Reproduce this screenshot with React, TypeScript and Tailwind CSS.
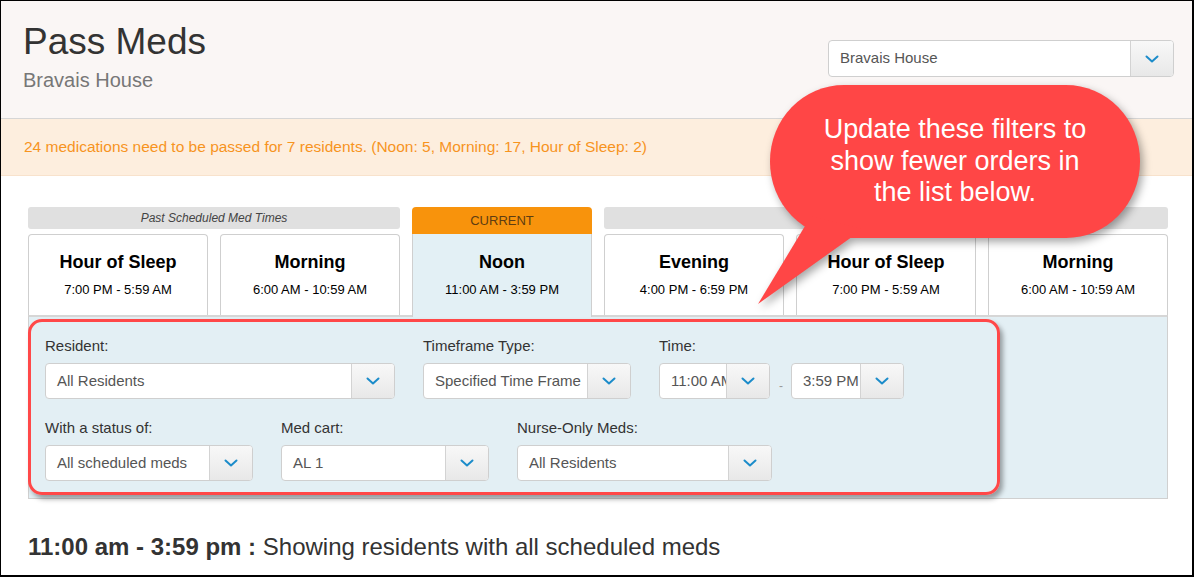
import React from "react";

const font = { fontFamily: '"Liberation Sans", Arial, sans-serif' };

function Chevron() {
  return (
    <svg width="14" height="8" viewBox="0 0 14 8" fill="none">
      <path d="M1.5 1.5l5.5 5 5.5-5" stroke="#1c8cca" strokeWidth="2" strokeLinecap="round" strokeLinejoin="round" />
    </svg>
  );
}

function Select({ value, width, h = "h-[36px]" }: { value: string; width: string; h?: string }) {
  return (
    <div className={`flex ${width} ${h} overflow-hidden rounded-[4px] border border-[#cfcfcf] bg-white`}>
      <div className="flex min-w-0 flex-1 items-center overflow-hidden whitespace-nowrap pl-[11px] text-[15px] text-[#555]">
        {value}
      </div>
      <div className="flex w-[43px] shrink-0 items-center justify-center border-l border-[#d3d3d3] bg-linear-to-b from-[#f8f8f8] to-[#e8e8e8]">
        <Chevron />
      </div>
    </div>
  );
}

function Field({ label, children }: { label: string; children: React.ReactNode }) {
  return (
    <div className="flex flex-col">
      <div className="mb-[8px] text-[15px] leading-[18px] text-[#333]">{label}</div>
      {children}
    </div>
  );
}

function Card({ title, time, current }: { title: string; time: string; current?: boolean }) {
  return (
    <div
      className={`relative text-center ${
        current
          ? "z-10 -mb-[2px] h-[83px] border-x border-[#cfcfcf] bg-[#e3f0f5] pt-[17px]"
          : "h-[81px] rounded-t-[4px] border-x border-t border-[#cfcfcf] bg-white pt-[16px]"
      }`}
    >
      <div className="text-[18px] font-bold leading-[22px] text-black">{title}</div>
      <div className="mt-[9px] text-[13px] leading-[16px] text-black">{time}</div>
    </div>
  );
}

export default function App() {
  return (
    <div style={font} className="relative h-[577px] w-[1194px] overflow-hidden border-t border-l border-r-2 border-b-2 border-black bg-white">
      <header className="flex h-[118px] items-start justify-between border-b border-[#d6d6d6] bg-[#faf6f5] pr-[18px] pl-[22px] pt-[22px]">
        <div>
          <h1 className="text-[37px] leading-none text-[#333]">Pass Meds</h1>
          <div className="mt-[10px] text-[20px] leading-none text-[#777]">Bravais House</div>
        </div>
        <div className="mt-[17px]">
          <Select value="Bravais House" width="w-[346px]" h="h-[37px]" />
        </div>
      </header>

      <div className="flex h-[57px] items-center border-b border-[#f8e2cc] bg-[#fdeede] pl-[23px] text-[15.5px] text-[#f7941e]">
        24 medications need to be passed for 7 residents. (Noon: 5, Morning: 17, Hour of Sleep: 2)
      </div>

      <main className="pl-[27px] pt-[31px]">
        <div className="w-[1140px]">
          <div className="grid h-[27px] grid-cols-6 items-start gap-x-[12px]">
            <div className="col-span-2 flex h-[22px] items-center justify-center rounded-[3px] bg-[#e0e0e0] text-[12px] italic text-[#444]">
              Past Scheduled Med Times
            </div>
            <div className="flex h-[27px] items-center justify-center rounded-t-[4px] bg-[#f8930c] text-[13px] text-[#5e3d12]">
              CURRENT
            </div>
            <div className="col-span-3 h-[22px] rounded-[3px] bg-[#e0e0e0]" />
          </div>
          <div className="grid grid-cols-6 items-start gap-x-[12px]">
            <Card title="Hour of Sleep" time="7:00 PM - 5:59 AM" />
            <Card title="Morning" time="6:00 AM - 10:59 AM" />
            <Card title="Noon" time="11:00 AM - 3:59 PM" current />
            <Card title="Evening" time="4:00 PM - 6:59 PM" />
            <Card title="Hour of Sleep" time="7:00 PM - 5:59 AM" />
            <Card title="Morning" time="6:00 AM - 10:59 AM" />
          </div>

          <section className="border-x border-b border-t-2 border-x-[#d0d0d0] border-b-[#d0d0d0] border-t-[#d6d6d6] bg-[#e3eff4] pb-[17px] pl-[16px] pt-[20px]">
            <div className="flex items-end gap-[28px]">
              <Field label="Resident:">
                <Select value="All Residents" width="w-[350px]" />
              </Field>
              <Field label="Timeframe Type:">
                <Select value="Specified Time Frame" width="w-[208px]" />
              </Field>
              <Field label="Time:">
                <div className="flex items-center">
                  <Select value="11:00 AM" width="w-[111px]" />
                  <span className="ml-[9px] mr-[8px] mt-[10px] text-[12px] text-[#999]">-</span>
                  <Select value="3:59 PM" width="w-[113px]" />
                </div>
              </Field>
            </div>
            <div className="mt-[20px] flex gap-[28px]">
              <Field label="With a status of:">
                <Select value="All scheduled meds" width="w-[208px]" />
              </Field>
              <Field label="Med cart:">
                <Select value="AL 1" width="w-[208px]" />
              </Field>
              <Field label="Nurse-Only Meds:">
                <Select value="All Residents" width="w-[255px]" />
              </Field>
            </div>
          </section>
        </div>

        <p className="mt-[34px] text-[24px] leading-[28px] text-[#333]">
          <span className="font-bold">11:00 am - 3:59 pm :</span> Showing residents with all scheduled meds
        </p>
      </main>

      {/* annotation overlays */}
      <div className="pointer-events-none absolute left-[27px] top-[318px] h-[176px] w-[972px] rounded-[14px] border-[3px] border-[#ff4848] shadow-[3px_4px_5px_rgba(0,0,0,0.35)]" />

      <svg
        className="pointer-events-none absolute left-0 top-0 drop-shadow-[3px_4px_4px_rgba(0,0,0,0.35)]"
        width="1194"
        height="577"
        viewBox="0 0 1194 577"
      >
        <rect x="769" y="84" width="370" height="153" rx="74" ry="76" fill="#ff4646" />
        <polygon points="810,215 862,228 757,303" fill="#ff4646" />
      </svg>
      <div className="pointer-events-none absolute left-[769px] top-[113px] w-[370px] text-center text-[27px] leading-[31.5px] text-white">
        Update these filters to
        <br />
        show fewer orders in
        <br />
        the list below.
      </div>
    </div>
  );
}
